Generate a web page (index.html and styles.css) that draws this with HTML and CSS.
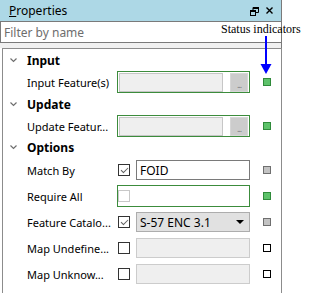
FILE: index.html
```html
<!DOCTYPE html>
<html lang="en">
<head>
  <meta charset="UTF-8">
  <meta name="viewport" content="width=device-width, initial-scale=1.0">
  <title>Properties</title>
  <link rel="stylesheet" href="styles.css">
</head>
<body>
  <div class="window">
    <div class="titlebar">
      <span class="title"><u>P</u>roperties</span>
      <span class="title-icons">
        <svg class="icon-restore" width="9" height="9" viewBox="0 0 9 9">
          <path d="M3 3V0.5H8.5V5.5H6" fill="none" stroke="#000" stroke-width="1"/>
          <rect x="3" y="0" width="6" height="2" fill="#000"/>
          <rect x="0.5" y="3.5" width="5" height="5" fill="none" stroke="#000" stroke-width="1"/>
          <rect x="0" y="3" width="6" height="2" fill="#000"/>
        </svg>
        <svg class="icon-close" width="7" height="7" viewBox="0 0 7 7">
          <path d="M0.5 0.5L6.5 6.5M6.5 0.5L0.5 6.5" stroke="#000" stroke-width="1.4"/>
        </svg>
      </span>
    </div>
    <input class="filter" type="text" placeholder="Filter by name">
    <div class="band"></div>

    <div class="grid">
      <div class="group">
        <svg class="chevron" width="7" height="5" viewBox="0 0 7 5"><path d="M0.5 0.5L3.5 3.5L6.5 0.5" fill="none" stroke="#6f6f6f" stroke-width="1.2"/></svg>
        <span>Input</span>
      </div>
      <div class="row">
        <span class="label">Input Feature(s)</span>
        <div class="control picker">
          <span class="picker-field"></span>
          <span class="browse">...</span>
        </div>
        <span class="status ok"></span>
      </div>

      <div class="group">
        <svg class="chevron" width="7" height="5" viewBox="0 0 7 5"><path d="M0.5 0.5L3.5 3.5L6.5 0.5" fill="none" stroke="#6f6f6f" stroke-width="1.2"/></svg>
        <span>Update</span>
      </div>
      <div class="row">
        <span class="label">Update Featur...</span>
        <div class="control picker">
          <span class="picker-field"></span>
          <span class="browse">...</span>
        </div>
        <span class="status ok"></span>
      </div>

      <div class="group group-options">
        <svg class="chevron" width="7" height="5" viewBox="0 0 7 5"><path d="M0.5 0.5L3.5 3.5L6.5 0.5" fill="none" stroke="#6f6f6f" stroke-width="1.2"/></svg>
        <span>Options</span>
      </div>
      <div class="row opt">
        <span class="label">Match By</span>
        <div class="control">
          <span class="check checked"></span>
          <span class="text-field">FOID</span>
        </div>
        <span class="status idle"></span>
      </div>
      <div class="row opt">
        <span class="label">Require All</span>
        <div class="control valid">
          <span class="check disabled"></span>
        </div>
        <span class="status ok"></span>
      </div>
      <div class="row opt">
        <span class="label">Feature Catalo...</span>
        <div class="control">
          <span class="check checked"></span>
          <span class="dropdown">S-57 ENC 3.1<span class="caret"></span></span>
        </div>
        <span class="status idle"></span>
      </div>
      <div class="row opt">
        <span class="label">Map Undefine...</span>
        <div class="control">
          <span class="check"></span>
          <span class="text-field off"></span>
        </div>
        <span class="status empty"></span>
      </div>
      <div class="row opt">
        <span class="label">Map Unknow...</span>
        <div class="control">
          <span class="check"></span>
          <span class="text-field off"></span>
        </div>
        <span class="status empty"></span>
      </div>
    </div>
  </div>

  <div class="note">Status indicators</div>
  <svg class="note-arrow" width="13" height="39" viewBox="0 0 13 39">
    <rect x="5" y="0" width="2" height="29" fill="#0000ff"/>
    <path d="M0.5 28H11.5L6 38Z" fill="#0000ff"/>
  </svg>
</body>
</html>
```

FILE: styles.css
```css
body {
  margin: 0;
  background-color: white;
  font-family: "Noto Sans", sans-serif;
  font-size: 11px;
  color: #000;
}
.window {
  width: 282px;
}
.titlebar {
  display: flex;
  align-items: center;
  justify-content: space-between;
  height: 22px;
  box-sizing: border-box;
  padding: 0 8px 0 9px;
  background-color: #add8e6;
  border-right: 1px solid #7a7a7a;
  border-bottom: 1px solid #7a7a7a;
  font-size: 12px;
}
.title u {
  text-decoration-thickness: 1px;
}
.title-icons {
  display: flex;
  align-items: center;
  gap: 7px;
}
.icon-restore {
  margin-top: 1px;
}
.filter {
  display: block;
  width: 282px;
  height: 21px;
  box-sizing: border-box;
  margin: 0;
  padding: 0 3px;
  border: 1px solid #7a7a7a;
  border-top: none;
  font-family: inherit;
  font-size: 12px;
  outline: none;
}
.filter::placeholder {
  color: #6d6d6d;
}
.band {
  height: 5px;
  background-color: #f0f0f0;
  border-right: 1px solid #7a7a7a;
}
.grid {
  margin-left: 2px;
  height: 244px;
  border: 1px solid #8c8c8c;
  border-bottom: none;
}
.group {
  display: flex;
  align-items: center;
  height: 22px;
  font-size: 12px;
  font-weight: bold;
}
.group-options {
  height: 20px;
}
.chevron {
  margin-left: 7px;
  margin-right: 10px;
}
.row {
  display: flex;
  align-items: center;
  height: 22px;
  font-size: 11px;
}
.row.opt {
  height: 26px;
}
.label {
  width: 90px;
  padding-left: 24px;
  white-space: nowrap;
  overflow: hidden;
}
.control {
  display: flex;
  align-items: center;
  gap: 6px;
  width: 133px;
  height: 22px;
  box-sizing: border-box;
  padding-left: 1px;
}
.control.valid {
  border: 1px solid #3c8c3c;
  padding-left: 0;
}
.picker {
  border: 1px solid #3c8c3c;
  padding: 1px;
  gap: 7px;
}
.picker-field {
  flex: 1;
  height: 19px;
  background-color: #efefef;
  border: 1px solid #c6c6c6;
  box-sizing: border-box;
}
.browse {
  width: 18px;
  height: 19px;
  box-sizing: border-box;
  background-color: #cccccc;
  border: 1px solid #d6d6d6;
  color: #7a7a7a;
  font-size: 9px;
  line-height: 22px;
  text-align: center;
  letter-spacing: -1px;
}
.check {
  position: relative;
  width: 12px;
  height: 12px;
  box-sizing: border-box;
  border: 1px solid #333;
  background-color: white;
  flex: none;
}
.check.disabled {
  border-color: #c8c8c8;
}
.check.checked::after {
  content: "";
  position: absolute;
  left: 2px;
  top: 1px;
  width: 6px;
  height: 3px;
  border-left: 1.2px solid #606060;
  border-bottom: 1.2px solid #606060;
  transform: rotate(-45deg) translate(-1px, 1px);
}
.text-field,
.dropdown {
  display: flex;
  align-items: center;
  width: 114px;
  height: 20px;
  box-sizing: border-box;
  padding-left: 3px;
  border: 1px solid #7a7a7a;
  background-color: white;
  font-size: 12px;
}
.text-field.off {
  border-color: #cccccc;
  background-color: #efefef;
}
.dropdown {
  justify-content: space-between;
  padding-right: 5px;
  border-color: #adadad;
  background-color: #e1e1e1;
}
.caret {
  width: 0;
  height: 0;
  border-left: 4px solid transparent;
  border-right: 4px solid transparent;
  border-top: 4px solid #000;
}
.status {
  width: 8px;
  height: 8px;
  box-sizing: border-box;
  margin-left: 13px;
  border: 1px solid #777;
}
.status.ok {
  background-color: #5dc26a;
  border-color: #2f8a3a;
}
.status.idle {
  background-color: #c3c3c3;
  border-color: #6f6f6f;
}
.status.empty {
  background-color: white;
  border-color: #000;
}
.note {
  position: absolute;
  left: 221px;
  top: 22px;
  font-family: "Liberation Serif", serif;
  font-size: 12px;
  line-height: 14px;
}
.note-arrow {
  position: absolute;
  left: 260px;
  top: 36px;
}
```
